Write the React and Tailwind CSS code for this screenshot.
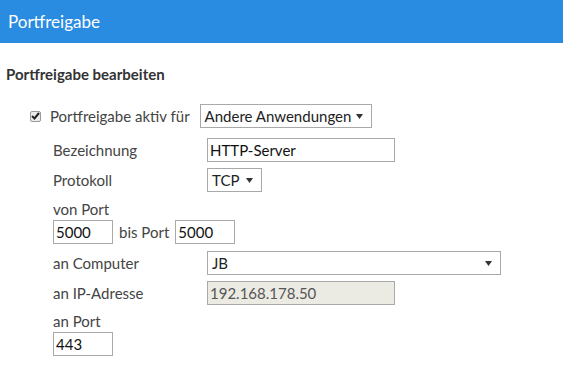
import React from "react";

const font = { fontFamily: "Lato, 'Open Sans', sans-serif" };

const Caret = () => (
  <svg width="7" height="5" viewBox="0 0 7 5" className="ml-auto shrink-0">
    <path d="M0 0h7L3.5 5z" fill="#333" />
  </svg>
);

const Select = ({ value, className }) => (
  <div
    className={`flex items-center h-[24px] border border-[#a9a9a9] bg-white pl-[4px] pr-[8px] text-[15px] text-[#222] whitespace-nowrap ${className}`}
  >
    <span className="mr-[4px]">{value}</span>
    <Caret />
  </div>
);

const Input = ({ value, className, disabled }) => (
  <div
    className={`flex items-center h-[24px] border border-[#a9a9a9] px-[2px] text-[15px] whitespace-nowrap ${
      disabled ? "bg-[#ebebe4] text-[#555]" : "bg-white text-[#111]"
    } ${className}`}
  >
    {value}
  </div>
);

const Row = ({ label, children }) => (
  <div className="flex items-center h-[24px]">
    <span className="w-[154px] text-[15px] text-[#444]">{label}</span>
    {children}
  </div>
);

export default function App() {
  return (
    <div className="w-[563px] h-[371px] bg-white overflow-hidden" style={font}>
      <header className="h-[43px] bg-[#2a8ce0] flex items-center px-[8px]">
        <h1 className="text-[17px] text-white">Portfreigabe</h1>
      </header>

      <div className="px-[6px] pt-[21px]">
        <h2 className="text-[15px] font-bold text-[#333] leading-[20px]">Portfreigabe bearbeiten</h2>

        <div className="pl-[24px] mt-[20px]">
          <div className="flex items-center h-[24px]">
            <span className="w-[11px] h-[11px] mr-[9px] rounded-[2px] border border-[#9a9a9a] bg-[#ececec] flex items-center justify-center">
              <svg width="9" height="8" viewBox="0 0 9 8">
                <path d="M1 4l2.5 2.5L8 1" stroke="#222" strokeWidth="2" fill="none" />
              </svg>
            </span>
            <span className="text-[15px] text-[#444] mr-[10px]">Portfreigabe aktiv für</span>
            <Select value="Andere Anwendungen" className="w-[172px]" />
          </div>

          <div className="pl-[23px] mt-[10px] flex flex-col">
            <Row label="Bezeichnung">
              <Input value="HTTP-Server" className="w-[188px]" />
            </Row>
            <div className="mt-[6px]">
              <Row label="Protokoll">
                <Select value="TCP" className="w-[55px]" />
              </Row>
            </div>
            <span className="mt-[6px] text-[15px] text-[#444] leading-[22px]">von Port</span>
            <div className="flex items-center">
              <Input value="5000" className="w-[60px]" />
              <span className="text-[15px] text-[#444] mx-[6px]">bis Port</span>
              <Input value="5000" className="w-[60px]" />
            </div>
            <div className="mt-[7px]">
              <Row label="an Computer">
                <Select value="JB" className="w-[294px]" />
              </Row>
            </div>
            <div className="mt-[6px]">
              <Row label="an IP-Adresse">
                <Input value="192.168.178.50" className="w-[188px]" disabled />
              </Row>
            </div>
            <span className="mt-[5px] text-[15px] text-[#444] leading-[22px]">an Port</span>
            <Input value="443" className="w-[60px]" />
          </div>
        </div>
      </div>
    </div>
  );
}
